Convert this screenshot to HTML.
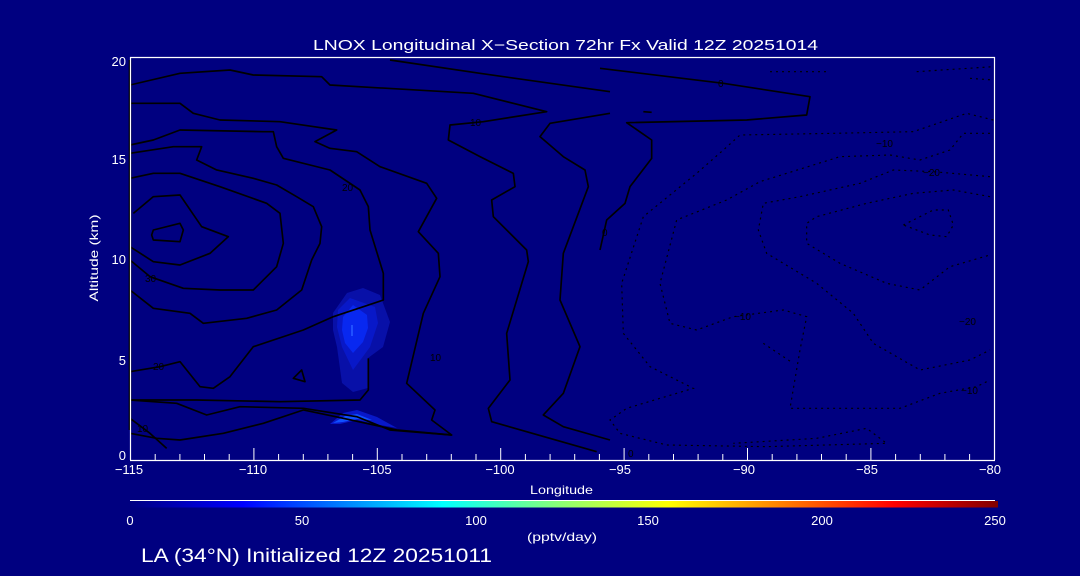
<!DOCTYPE html>
<html><head><meta charset="utf-8"><style>
html,body{margin:0;padding:0;background:#000080;}
svg{display:block;}
text{font-family:"Liberation Sans",sans-serif;fill:#fff;}
.cl{fill:#000;font-size:10px;}
</style></head><body>
<svg width="1080" height="576" viewBox="0 0 1080 576">
<defs>
<linearGradient id="jet" x1="0" x2="1" y1="0" y2="0">
<stop offset="0" stop-color="#000080"/>
<stop offset="0.13" stop-color="#0000ff"/>
<stop offset="0.36" stop-color="#00ffff"/>
<stop offset="0.5" stop-color="#90ff70"/>
<stop offset="0.62" stop-color="#ffff00"/>
<stop offset="0.88" stop-color="#ff0000"/>
<stop offset="1" stop-color="#800000"/>
</linearGradient>
</defs>
<rect width="1080" height="576" fill="#000080"/>
<!-- blobs -->
<polygon fill="#0810a8" points="333,313 347,293 363,288 380,295 390,322 383,347 368,358 368,388 353,392 342,383 337,347 333,330"/>
<polygon fill="#0818c8" points="338,310 350,298 375,307 378,323 370,347 353,370 342,347 337,327"/>
<polygon fill="#0828f0" points="343,317 353,305 367,315 368,328 363,342 353,353 345,343 342,330"/>
<rect x="351" y="325" width="2" height="11" fill="#2050ff"/>
<polygon fill="#0818c8" points="330,424 343,413 357,410 377,417 397,428 380,425 357,420 340,424"/>
<polygon fill="#1050ff" points="333,423 345,416 357,414 372,420 357,419 343,422"/>

<!-- solid contours -->
<g transform="translate(130,60) scale(0.33333)" fill="none" stroke="#000" stroke-width="5" stroke-linejoin="round">
<polyline points="0,75 150,40 300,30 370,45 575,50 600,75 1030,100 1250,155 1060,185 960,195 955,240 1050,290 1150,340 1155,380 1085,420 1090,470 1190,570 1195,605 1130,820 1140,960 1075,1045 1085,1085 1400,1175"/>
<polyline points="780,0 1050,40 1440,95"/>
<polyline points="1440,160 1260,190 1230,230 1300,290 1365,330 1375,380 1300,580 1290,720 1350,860 1300,1000 1240,1065 1300,1100 1440,1140"/>
<polyline points="0,130 150,130 190,160 270,180 450,185 620,210 555,245 600,265 680,275 750,320 890,370 920,415 865,515 925,580 930,650 880,760 830,970 915,1050 905,1080 965,1125 780,1110 680,1070 520,1045 330,1040 230,1065 140,1030 0,1020"/>
<polyline points="0,255 70,240 150,210 400,215 430,215 440,260 460,295 600,330 690,390 715,440 720,510 760,640 760,720 610,770 520,810 370,860 300,950 250,985 210,980 150,905 90,920 0,935"/>
<polyline points="0,280 130,260 215,260 200,300 260,330 370,355 440,375 500,410 550,440 575,500 570,550 545,600 515,690 440,750 350,775 220,790 180,760 70,745 0,690"/>
<polyline points="0,355 70,340 150,340 270,380 410,430 450,460 460,550 440,620 370,690 270,690 160,685 60,650 0,600"/>
<polyline points="10,460 70,410 150,405 215,500 295,530 240,580 150,615 70,605 0,560"/>
<polygon points="70,510 150,490 160,510 150,545 70,540 65,525"/>
<polygon points="490,955 515,930 525,965"/>
<polyline points="715,895 715,990 690,1020 450,1025 200,1020 0,1020"/>
<polyline points="0,1120 80,1135 150,1140 280,1120 400,1090 520,1050 640,1075 800,1110 965,1125"/>
<polyline points="0,1075 60,1120 110,1165"/>
<line x1="0" y1="0" x2="0" y2="1110" stroke-width="8"/>
</g>
<g transform="translate(600,50) scale(0.33333)" fill="none" stroke="#000" stroke-width="5" stroke-linejoin="round">
<polyline points="0,55 370,100 630,140 620,195 440,210 80,218 155,270 155,325 90,410 75,460 20,510 0,600"/>
<polyline points="130,185 155,187"/>
</g>
<!-- dotted contours -->
<g transform="translate(600,50) scale(0.33333)" fill="none" stroke="#000" stroke-width="3.5" stroke-dasharray="6,12">
<polyline points="1180,210 1100,190 940,245 700,250 420,255 370,300 290,370 130,500 65,700 70,850 150,950 280,1015 80,1075 30,1110 60,1150 200,1185 500,1190 860,1180 800,1135 650,1165 400,1180"/>
<polyline points="1170,250 1090,250 1050,300 960,330 870,315 720,320 480,395 380,450 230,510 180,700 210,820 290,840 400,800 550,780 620,800 600,900 570,1075 900,1075 1020,1030 1130,1010 1170,990"/>
<polyline points="1170,380 1000,365 880,360 780,400 600,440 490,460 475,540 500,610 650,700 760,790 820,880 960,960 1110,930 1170,900"/>
<polyline points="1170,440 1060,420 940,430 800,460 650,500 620,520 620,580 720,640 860,700 960,720 1050,650 1170,615"/>
<polygon points="910,525 1000,480 1045,480 1060,525 1040,560 990,555"/>
<polyline points="490,880 580,940"/>
<polyline points="510,65 680,65"/>
<polyline points="950,65 1180,50"/>
<polyline points="1110,85 1180,90"/>
</g>
<!-- contour labels -->
<text class="cl" x="470" y="126">10</text>
<text class="cl" x="342" y="191">20</text>
<text class="cl" x="145" y="282">30</text>
<text class="cl" x="153" y="370">20</text>
<text class="cl" x="137" y="432">10</text>
<text class="cl" x="430" y="361">10</text>
<text class="cl" x="602" y="236">0</text>
<text class="cl" x="718" y="87">0</text>
<text class="cl" x="628" y="457">0</text>
<text class="cl" x="876" y="147">−10</text>
<text class="cl" x="923" y="176">−20</text>
<text class="cl" x="734" y="320">−10</text>
<text class="cl" x="959" y="325">−20</text>
<text class="cl" x="961" y="394">−10</text>

<!-- axes box -->
<g stroke="#fff" stroke-width="1.2" fill="none">
<line x1="130" y1="57.5" x2="995" y2="57.5"/>
<line x1="994.5" y1="57" x2="994.5" y2="460"/>
<line x1="130" y1="460.5" x2="995" y2="460.5"/>
<line x1="130.5" y1="57" x2="130.5" y2="460"/>
</g>
<g stroke="#fff" stroke-width="1">
<line x1="130.5" y1="460" x2="130.5" y2="448"/>
<line x1="253.9" y1="460" x2="253.9" y2="448"/>
<line x1="377.3" y1="460" x2="377.3" y2="448"/>
<line x1="500.7" y1="460" x2="500.7" y2="448"/>
<line x1="624.1" y1="460" x2="624.1" y2="448"/>
<line x1="747.5" y1="460" x2="747.5" y2="448"/>
<line x1="870.9" y1="460" x2="870.9" y2="448"/>
<line x1="155.2" y1="460" x2="155.2" y2="454"/><line x1="179.9" y1="460" x2="179.9" y2="454"/><line x1="204.5" y1="460" x2="204.5" y2="454"/><line x1="229.2" y1="460" x2="229.2" y2="454"/>
<line x1="278.6" y1="460" x2="278.6" y2="454"/><line x1="303.3" y1="460" x2="303.3" y2="454"/><line x1="327.9" y1="460" x2="327.9" y2="454"/><line x1="352.6" y1="460" x2="352.6" y2="454"/>
<line x1="402" y1="460" x2="402" y2="454"/><line x1="426.7" y1="460" x2="426.7" y2="454"/><line x1="451.3" y1="460" x2="451.3" y2="454"/><line x1="476" y1="460" x2="476" y2="454"/>
<line x1="525.4" y1="460" x2="525.4" y2="454"/><line x1="550.1" y1="460" x2="550.1" y2="454"/><line x1="574.7" y1="460" x2="574.7" y2="454"/><line x1="599.4" y1="460" x2="599.4" y2="454"/>
<line x1="648.8" y1="460" x2="648.8" y2="454"/><line x1="673.5" y1="460" x2="673.5" y2="454"/><line x1="698.1" y1="460" x2="698.1" y2="454"/><line x1="722.8" y1="460" x2="722.8" y2="454"/>
<line x1="772.2" y1="460" x2="772.2" y2="454"/><line x1="796.9" y1="460" x2="796.9" y2="454"/><line x1="821.5" y1="460" x2="821.5" y2="454"/><line x1="846.2" y1="460" x2="846.2" y2="454"/>
<line x1="895.6" y1="460" x2="895.6" y2="454"/><line x1="920.3" y1="460" x2="920.3" y2="454"/><line x1="944.9" y1="460" x2="944.9" y2="454"/><line x1="969.6" y1="460" x2="969.6" y2="454"/>
</g>

<!-- title -->
<text x="313" y="50" font-size="15" textLength="505" lengthAdjust="spacingAndGlyphs">LNOX Longitudinal X−Section 72hr  Fx Valid 12Z 20251014</text>
<g font-size="13" text-anchor="end">
<text x="126" y="66">20</text>
<text x="126" y="164">15</text>
<text x="126" y="264">10</text>
<text x="126" y="365">5</text>
<text x="126" y="460">0</text>
</g>
<text transform="translate(98,258) rotate(-90)" font-size="12" text-anchor="middle" textLength="87" lengthAdjust="spacingAndGlyphs">Altitude (km)</text>
<g font-size="13" text-anchor="middle">
<text x="129" y="474">−115</text>
<text x="253" y="474">−110</text>
<text x="377" y="474">−105</text>
<text x="500" y="474">−100</text>
<text x="620" y="474">−95</text>
<text x="744" y="474">−90</text>
<text x="867" y="474">−85</text>
<text x="990" y="474">−80</text>
</g>
<text x="530" y="494" font-size="12" textLength="63" lengthAdjust="spacingAndGlyphs">Longitude</text>
<line x1="130" y1="500.5" x2="995" y2="500.5" stroke="#fff" stroke-width="1"/>
<rect x="130" y="501" width="868" height="6.5" fill="url(#jet)"/>
<g font-size="13" text-anchor="middle">
<text x="130" y="525">0</text>
<text x="302" y="525">50</text>
<text x="476" y="525">100</text>
<text x="648" y="525">150</text>
<text x="822" y="525">200</text>
<text x="995" y="525">250</text>
</g>
<text x="527" y="541" font-size="12" textLength="70" lengthAdjust="spacingAndGlyphs">(pptv/day)</text>
<text x="141" y="562" font-size="19" textLength="351" lengthAdjust="spacingAndGlyphs">LA (34°N) Initialized 12Z 20251011</text>
</svg>
</body></html>
